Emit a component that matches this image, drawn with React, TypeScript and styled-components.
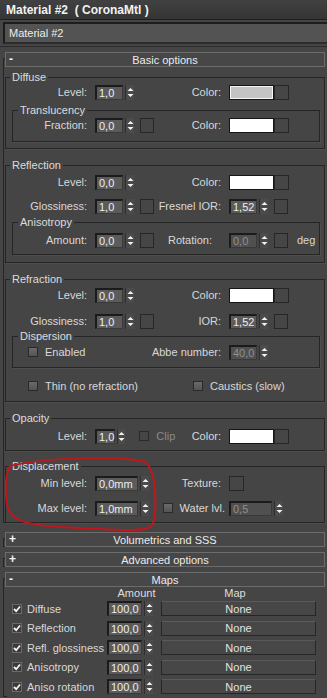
import React from "react";
import styled, { createGlobalStyle } from "styled-components";

const Global = createGlobalStyle`
  html, body { margin: 0; padding: 0; background: #454545; }
  * { box-sizing: border-box; }
`;

const FONT = `"Liberation Sans", Arial, sans-serif`;

const Root = styled.div`
  position: relative;
  width: 327px;
  height: 698px;
  overflow: hidden;
  background: #454545;
  font-family: ${FONT};
  font-size: 11px;
  color: #d8d8d8;
`;

const TitleBar = styled.div`
  height: 20px;
  display: flex;
  align-items: center;
  padding-left: 6px;
  font-size: 12px;
  font-weight: bold;
  color: #f2f2f2;
  white-space: pre;
  background: linear-gradient(#414141, #353535);
  border-bottom: 1px solid #1f1f1f;
`;

const NameField = styled.div`
  margin: 2px 0 0 3px;
  height: 22px;
  display: flex;
  align-items: center;
  padding-left: 4px;
  background: #535353;
  border: 2px solid #1d1d1d;
  border-right: none;
  border-bottom-color: #2c2c2c;
  color: #ececec;
`;

const Separator = styled.div`
  margin-top: 2px;
  height: 1px;
  background: #2b2b2b;
`;

const Rollout = styled.section<{ $mt: number }>`
  position: relative;
  margin: ${(p) => p.$mt}px 2px 0 3px;
  padding-left: 2px;
  &::before {
    content: "";
    position: absolute;
    left: 0;
    top: 6px;
    bottom: 0;
    width: 3px;
    border: 1px solid #262626;
    border-right: none;
  }
`;

const RolloutHeader = styled.div`
  position: relative;
  height: 15px;
  display: flex;
  align-items: center;
  justify-content: center;
  border: 1px solid #6c6c6c;
  background: #474747;
  color: #ececec;
`;

const Sign = styled.span`
  position: absolute;
  left: 3px;
  top: -1px;
  font-weight: bold;
  font-size: 12px;
  color: #f4f4f4;
`;

const Body = styled.div<{ $pb?: number }>`
  padding-bottom: ${(p) => p.$pb ?? 0}px;
`;

const Group = styled.fieldset<{ $mt: number; $pb: number; $ml?: number; $mr?: number }>`
  margin: ${(p) => p.$mt}px ${(p) => p.$mr ?? 0}px 0 ${(p) => p.$ml ?? 0}px;
  padding: 0 0 ${(p) => p.$pb}px 0;
  min-width: 0;
  border: 1px solid #252525;
  box-shadow: 1px 1px 0 #4e4e4e;
`;

const Legend = styled.legend<{ $ml?: number }>`
  margin-left: ${(p) => p.$ml ?? 4}px;
  padding: 0 2px;
  line-height: 14px;
  font-size: 11px;
  color: #dcdcdc;
`;

const Row = styled.div<{ $x: number; $mt?: number }>`
  display: grid;
  grid-template-columns: ${(p) => 95 - p.$x}px 65px 69px auto;
  height: 16px;
  align-items: center;
  margin-top: ${(p) => p.$mt ?? 0}px;
`;

const Label = styled.span<{ $pr?: number }>`
  display: flex;
  justify-content: flex-end;
  align-items: center;
  padding-right: ${(p) => p.$pr ?? 8}px;
  white-space: nowrap;
`;

const CheckCell = styled.span<{ $pl: number }>`
  display: flex;
  align-items: center;
  padding-left: ${(p) => p.$pl}px;
  gap: 7px;
  white-space: nowrap;
`;

const Cell = styled.div`
  display: flex;
  align-items: center;
  white-space: nowrap;
`;

const CheckRow = styled.div<{ $x: number; $mt?: number }>`
  display: grid;
  grid-template-columns: ${(p) => 193 - p.$x}px auto;
  height: 16px;
  align-items: center;
  margin-top: ${(p) => p.$mt ?? 0}px;
`;

const Field = styled.div<{ $w: number; $dim?: boolean }>`
  width: ${(p) => p.$w}px;
  height: 15px;
  display: flex;
  align-items: center;
  padding-left: 2px;
  background: ${(p) => (p.$dim ? "#505050" : "#5b5b5b")};
  border: 1px solid #1b1b1b;
  border-top-width: 2px;
  border-left-width: 2px;
  border-right-color: #3a3a3a;
  border-bottom-color: #3a3a3a;
  color: ${(p) => (p.$dim ? "#8f8f8f" : "#eeeeee")};
  font-size: 11px;
`;

const ArrowBox = styled.div`
  width: 9px;
  height: 15px;
  margin-left: 2px;
  display: flex;
  align-items: center;
  justify-content: center;
  background: #4b4b4b;
  border-left: 1px solid #2e2e2e;
`;

const MapBtn = styled.div<{ $ml?: number; $w?: number }>`
  width: ${(p) => p.$w ?? 14}px;
  height: 15px;
  margin-left: ${(p) => p.$ml ?? 6}px;
  background: #464646;
  border: 1px solid #262626;
`;

const Swatch = styled.div<{ $color: string; $inner?: boolean }>`
  width: 45px;
  height: 15px;
  background: ${(p) => p.$color};
  border: 1px solid #151515;
  box-shadow: ${(p) => (p.$inner ? "inset 0 0 0 1px #f4f4f4" : "none")};
`;

const Box = styled.span<{ $dim?: boolean; $checked?: boolean }>`
  width: 10px;
  height: 10px;
  flex: none;
  display: inline-flex;
  align-items: center;
  justify-content: center;
  border: 1px solid ${(p) => (p.$checked ? "#6a6a6a" : "#2a2a2a")};
  background: ${(p) =>
    p.$checked
      ? "#3a3a3a"
      : p.$dim
      ? "#464646"
      : "linear-gradient(#6a6a6a, #545454)"};
`;

const DimText = styled.span`
  color: #8a8a8a;
`;

const Unit = styled.span`
  margin-left: 9px;
`;

const MapsHead = styled.div`
  display: grid;
  grid-template-columns: 95px 54px 155px;
  height: 12px;
  align-items: center;
  padding-left: 7px;
  color: #dedede;
`;

const HeadCell = styled.span<{ $shift?: number }>`
  display: flex;
  justify-content: center;
  transform: translateX(${(p) => p.$shift ?? 0}px);
`;

const MapRow = styled.div`
  display: grid;
  grid-template-columns: 95px 54px 155px;
  height: 19.5px;
  align-items: center;
  padding-left: 7px;
`;

const MapLabel = styled.span`
  display: flex;
  align-items: center;
  gap: 5px;
  white-space: nowrap;
`;

const NoneBtn = styled.div`
  height: 15px;
  display: flex;
  align-items: center;
  justify-content: center;
  background: #474747;
  border: 1px solid #262626;
  border-top-color: #5a5a5a;
  color: #e2e2e2;
`;

const Annotation = styled.svg`
  position: absolute;
  left: 0;
  top: 0;
  pointer-events: none;
`;

const Arrows = () => (
  <ArrowBox>
    <svg width="7" height="13" viewBox="0 0 7 13">
      <polygon points="0.5,5 3.5,2 6.5,5" fill="#f2f2f2" />
      <polygon points="0.5,8 3.5,11 6.5,8" fill="#f2f2f2" />
    </svg>
  </ArrowBox>
);

const Spinner = ({ v, w = 28, dim }: { v: string; w?: number; dim?: boolean }) => (
  <>
    <Field $w={w} $dim={dim}>{v}</Field>
    <Arrows />
  </>
);

const Check = ({ checked, dim }: { checked?: boolean; dim?: boolean }) => (
  <Box $checked={checked} $dim={dim}>
    {checked && (
      <svg width="8" height="8" viewBox="0 0 8 8">
        <path d="M1 4 L3.2 6.2 L7 1.5" stroke="#f4f4f4" strokeWidth="1.8" fill="none" />
      </svg>
    )}
  </Box>
);

const Header = ({ sign, title }: { sign: string; title: string }) => (
  <RolloutHeader>
    <Sign>{sign}</Sign>
    {title}
  </RolloutHeader>
);

const maps = ["Diffuse", "Reflection", "Refl. glossiness", "Anisotropy", "Aniso rotation"];

export default function App() {
  return (
    <Root>
      <Global />
      <TitleBar>{"Material #2  ( CoronaMtl )"}</TitleBar>
      <NameField>Material #2</NameField>
      <Separator />

      <Rollout $mt={5}>
        <Header sign="-" title="Basic options" />
        <Body>
          <Group $mt={3} $pb={6}>
            <Legend>Diffuse</Legend>
            <Row $x={6}>
              <Label>Level:</Label>
              <Cell><Spinner v="1,0" /></Cell>
              <Label>Color:</Label>
              <Cell><Swatch $color="#c3c3c3" $inner /><MapBtn $ml={0} $w={15} /></Cell>
            </Row>
            <Group $mt={3} $pb={8} $ml={6} $mr={4}>
              <Legend $ml={5}>Translucency</Legend>
              <Row $x={13}>
                <Label>Fraction:</Label>
                <Cell><Spinner v="0,0" /><MapBtn /></Cell>
                <Label>Color:</Label>
                <Cell><Swatch $color="#ffffff" /><MapBtn $ml={0} $w={15} /></Cell>
              </Row>
            </Group>
          </Group>

          <Group $mt={9} $pb={7}>
            <Legend>Reflection</Legend>
            <Row $x={6} $mt={2}>
              <Label>Level:</Label>
              <Cell><Spinner v="0,0" /></Cell>
              <Label>Color:</Label>
              <Cell><Swatch $color="#ffffff" /><MapBtn $ml={0} $w={15} /></Cell>
            </Row>
            <Row $x={6} $mt={8}>
              <Label>Glossiness:</Label>
              <Cell><Spinner v="1,0" /><MapBtn /></Cell>
              <Label>Fresnel IOR:</Label>
              <Cell><Spinner v="1,52" /><MapBtn /></Cell>
            </Row>
            <Group $mt={1} $pb={6} $ml={6} $mr={4}>
              <Legend $ml={5}>Anisotropy</Legend>
              <Row $x={13} $mt={3}>
                <Label>Amount:</Label>
                <Cell><Spinner v="0,0" /><MapBtn /></Cell>
                <Label $pr={17}>Rotation:</Label>
                <Cell><Spinner v="0,0" dim /><MapBtn /><Unit>deg</Unit></Cell>
              </Row>
            </Group>
          </Group>

          <Group $mt={9} $pb={7}>
            <Legend>Refraction</Legend>
            <Row $x={6} $mt={1}>
              <Label>Level:</Label>
              <Cell><Spinner v="0,0" /></Cell>
              <Label>Color:</Label>
              <Cell><Swatch $color="#ffffff" /><MapBtn $ml={0} $w={15} /></Cell>
            </Row>
            <Row $x={6} $mt={10}>
              <Label>Glossiness:</Label>
              <Cell><Spinner v="1,0" /><MapBtn /></Cell>
              <Label>IOR:</Label>
              <Cell><Spinner v="1,52" /><MapBtn /></Cell>
            </Row>
            <Group $mt={0} $pb={7} $ml={6} $mr={4}>
              <Legend $ml={5}>Dispersion</Legend>
              <Row $x={13} $mt={1}>
                <CheckCell $pl={15}><Check />Enabled</CheckCell>
                <span />
                <Label>Abbe number:</Label>
                <Cell><Spinner v="40,0" dim /></Cell>
              </Row>
            </Group>
            <CheckRow $x={6} $mt={10}>
              <CheckCell $pl={22}><Check />Thin (no refraction)</CheckCell>
              <CheckCell $pl={0}><Check />Caustics (slow)</CheckCell>
            </CheckRow>
          </Group>

          <Group $mt={9} $pb={6}>
            <Legend>Opacity</Legend>
            <Row $x={6} $mt={3}>
              <Label>Level:</Label>
              <Cell>
                <Spinner v="1,0" />
                <CheckCell $pl={14}><Check dim /><DimText>Clip</DimText></CheckCell>
              </Cell>
              <Label>Color:</Label>
              <Cell><Swatch $color="#ffffff" /><MapBtn $ml={0} $w={15} /></Cell>
            </Row>
          </Group>

          <Group $mt={8} $pb={6}>
            <Legend>Displacement</Legend>
            <Row $x={6} $mt={2}>
              <Label>Min level:</Label>
              <Cell><Spinner v="0,0mm" w={43} /></Cell>
              <Label>Texture:</Label>
              <Cell><MapBtn $ml={0} $w={15} /></Cell>
            </Row>
            <Row $x={6} $mt={9}>
              <Label>Max level:</Label>
              <Cell><Spinner v="1,0mm" w={43} /></Cell>
              <Label $pr={4}>
                <CheckCell $pl={0}><Check />Water lvl.</CheckCell>
              </Label>
              <Cell><Spinner v="0,5" w={43} dim /></Cell>
            </Row>
          </Group>
        </Body>
      </Rollout>

      <Rollout $mt={9}>
        <Header sign="+" title="Volumetrics and SSS" />
      </Rollout>
      <Rollout $mt={5}>
        <Header sign="+" title="Advanced options" />
      </Rollout>
      <Rollout $mt={5}>
        <Header sign="-" title="Maps" />
        <Body>
          <MapsHead>
            <span />
            <HeadCell $shift={2.5}>Amount</HeadCell>
            <HeadCell $shift={-3.5}>Map</HeadCell>
          </MapsHead>
          {maps.map((m) => (
            <MapRow key={m}>
              <MapLabel><Check checked />{m}</MapLabel>
              <Cell><Spinner v="100,0" w={35} /></Cell>
              <NoneBtn>None</NoneBtn>
            </MapRow>
          ))}
        </Body>
      </Rollout>

      <Annotation width="327" height="698" viewBox="0 0 327 698">
        <path
          d="M 10 466 C 40 458, 120 455, 145 462 C 157 470, 157 510, 153 524 C 149 533, 120 530, 60 527 C 25 525, 10 520, 7 505 C 5 490, 5 475, 10 466"
          stroke="#c0161c"
          strokeWidth="2"
          fill="none"
        />
      </Annotation>
    </Root>
  );
}
